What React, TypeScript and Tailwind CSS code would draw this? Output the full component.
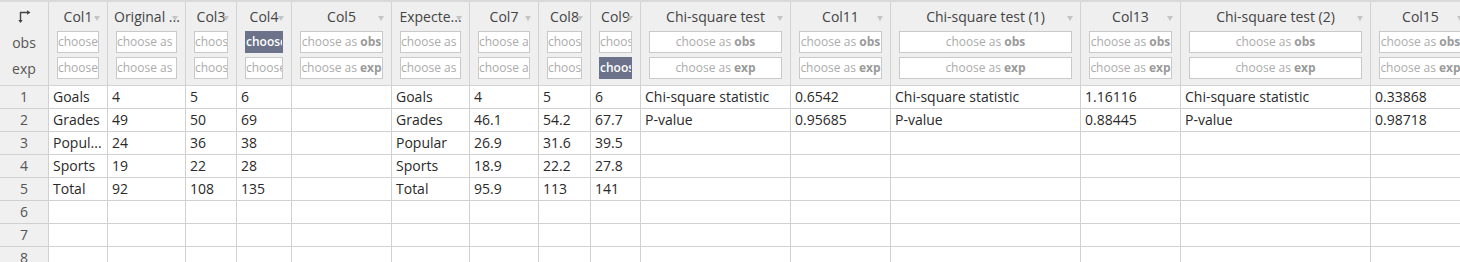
import React from "react";

type Col = { title: string; obsSel?: boolean; expSel?: boolean };

const columns: Col[] = [
  { title: "Col1" },
  { title: "Original ..." },
  { title: "Col3" },
  { title: "Col4", obsSel: true },
  { title: "Col5" },
  { title: "Expecte..." },
  { title: "Col7" },
  { title: "Col8" },
  { title: "Col9", expSel: true },
  { title: "Chi-square test" },
  { title: "Col11" },
  { title: "Chi-square test (1)" },
  { title: "Col13" },
  { title: "Chi-square test (2)" },
  { title: "Col15" },
];

const rows: string[][] = [
  ["Goals", "4", "5", "6", "", "Goals", "4", "5", "6", "Chi-square statistic", "0.6542", "Chi-square statistic", "1.16116", "Chi-square statistic", "0.33868"],
  ["Grades", "49", "50", "69", "", "Grades", "46.1", "54.2", "67.7", "P-value", "0.95685", "P-value", "0.88445", "P-value", "0.98718"],
  ["Popul...", "24", "36", "38", "", "Popular", "26.9", "31.6", "39.5"],
  ["Sports", "19", "22", "28", "", "Sports", "18.9", "22.2", "27.8"],
  ["Total", "92", "108", "135", "", "Total", "95.9", "113", "141"],
  [],
  [],
  [],
];

const Caret = () => (
  <svg width="6" height="5" viewBox="0 0 6 5" className="absolute right-[7px] top-[14px]">
    <path d="M0 0 H6 L3 5 Z" fill="#c4c4c4" />
  </svg>
);

const CornerIcon = () => (
  <svg width="14" height="13" viewBox="0 0 14 13">
    <path d="M3.5 11 V2.5 H11" stroke="#444" strokeWidth="1.4" fill="none" />
    <path d="M10 0.3 L13.5 2.5 L10 4.7 Z" fill="#444" />
    <path d="M1.3 10 L3.5 13 L5.7 10 Z" fill="#444" />
  </svg>
);

const Chooser = ({ kind, selected }: { kind: string; selected?: boolean }) =>
  selected ? (
    <div className="h-[22px] border border-[#6b7289] bg-[#6b7289] overflow-hidden whitespace-nowrap text-center text-[12px] leading-[20px] font-semibold text-white">
      choose as {kind}
    </div>
  ) : (
    <div className="h-[22px] border border-[#c9c9c9] bg-white overflow-hidden whitespace-nowrap text-center text-[12px] leading-[20px] text-[#ababab]">
      choose as <span className="font-bold text-[#9a9a9a]">{kind}</span>
    </div>
  );

export default function App() {
  return (
    <div className="w-full h-[262px] overflow-hidden bg-white" style={{ fontFamily: '"Open Sans", "DejaVu Sans", sans-serif' }}>
      <div className="grid w-[1471px] grid-cols-[49px_59px_78px_51px_55px_100px_78px_69px_52px_50px_150px_100px_190px_100px_190px_100px] border-t-2 border-[#d9d9d9] text-[14px] text-[#2a2a2a]">
        {/* header */}
        <div className="flex flex-col bg-[#efefef] border-r border-b border-[#d3d3d3] pb-[6px] text-[#555]">
          <div className="h-[29px] flex items-center justify-center">
            <CornerIcon />
          </div>
          <div className="h-[22px] flex items-center justify-center">obs</div>
          <div className="h-[22px] mt-[4px] flex items-center justify-center">exp</div>
        </div>
        {columns.map((c) => (
          <div key={c.title} className="relative flex flex-col bg-[#efefef] border-r border-b border-[#d3d3d3] pb-[6px]">
            <div className="h-[29px] px-[6px] text-center leading-[29px] whitespace-nowrap overflow-hidden text-[#444]">
              {c.title}
            </div>
            <Caret />
            <div className="px-2">
              <Chooser kind="obs" selected={c.obsSel} />
            </div>
            <div className="px-2 mt-[4px]">
              <Chooser kind="exp" selected={c.expSel} />
            </div>
          </div>
        ))}

        {/* body */}
        {rows.map((r, i) => (
          <React.Fragment key={i}>
            <div className="h-[23px] bg-[#f0f0f0] border-r border-b border-[#d0d0d0] text-center leading-[22px] text-[#555]">
              {i + 1}
            </div>
            {columns.map((c, j) => (
              <div key={c.title} className="h-[23px] border-r border-b border-[#d0d0d0] pl-1 leading-[22px] whitespace-nowrap overflow-hidden">
                {r[j] ?? ""}
              </div>
            ))}
          </React.Fragment>
        ))}
      </div>
    </div>
  );
}
